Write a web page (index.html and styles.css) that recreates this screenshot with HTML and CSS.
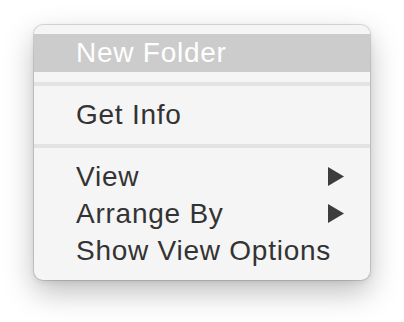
FILE: index.html
```html
<!DOCTYPE html>
<html>
<head>
<meta charset="utf-8">
<link rel="stylesheet" href="styles.css">
</head>
<body>
<div class="stage">
  <div class="menu">
    <div class="item item-hl">New Folder</div>
    <div class="sep"></div>
    <div class="item">Get Info</div>
    <div class="sep"></div>
    <div class="item item-sm"><span>View</span><svg class="arrow" width="16" height="19" viewBox="0 0 16 19"><polygon points="0,0 16,9.5 0,19" fill="#3d3d3d"/></svg></div>
    <div class="item item-sm"><span>Arrange By</span><svg class="arrow" width="16" height="19" viewBox="0 0 16 19"><polygon points="0,0 16,9.5 0,19" fill="#3d3d3d"/></svg></div>
    <div class="item item-sm">Show View Options</div>
  </div>
</div>
</body>
</html>
```
FILE: styles.css
```css
html, body {
  margin: 0;
  padding: 0;
  background: #ffffff;
}
.stage {
  height: 322px;
  box-sizing: border-box;
  padding: 25px 0 0 34px;
}
.menu {
  width: 336px;
  height: 255px;
  box-sizing: border-box;
  padding: 9px 0 11px;
  background: #f5f5f5;
  border-radius: 9px;
  box-shadow: 0 0 0 1px rgba(0,0,0,0.12), 0 12px 30px rgba(0,0,0,0.26), 0 2px 6px rgba(0,0,0,0.08);
  font-family: "Liberation Sans", Arial, sans-serif;
  font-size: 28px;
  letter-spacing: 0.75px;
  color: #333333;
  overflow: hidden;
}
.item {
  height: 38px;
  line-height: 38px;
  padding: 0 26px 0 42px;
  display: flex;
  align-items: center;
  justify-content: space-between;
  white-space: nowrap;
}
.item-sm {
  height: 37px;
  line-height: 37px;
}
.item-hl {
  background: #cccccc;
  color: #ffffff;
}
.sep {
  height: 4px;
  margin: 10px 0;
  background: #e3e3e3;
}
.arrow {
  display: block;
  flex: none;
}
```
